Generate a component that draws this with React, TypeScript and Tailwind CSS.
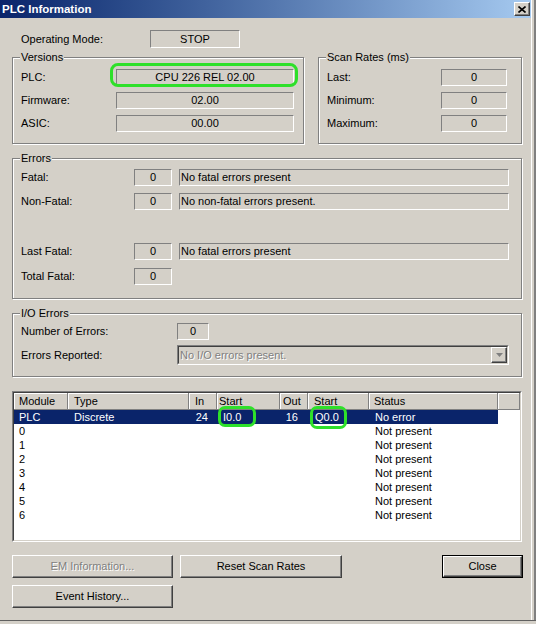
import React from "react";

const sunken =
  "border border-t-[#808080] border-l-[#808080] border-b-white border-r-white";
const raised =
  "border border-t-white border-l-white border-r-[#404040] border-b-[#404040] shadow-[inset_-1px_-1px_0_#808080]";

function Group({
  title,
  className,
  children,
}: {
  title: string;
  className: string;
  children?: React.ReactNode;
}) {
  return (
    <div
      className={
        "border border-[#808080] shadow-[inset_1px_1px_0_#fff,1px_1px_0_#fff] flex flex-col " +
        className
      }
    >
      <div className="-mt-[7px] ml-[7px] px-[1px] bg-[#d4d0c8] self-start leading-[13px]">
        {title}
      </div>
      {children}
    </div>
  );
}

function Btn({
  label,
  className,
  disabled,
}: {
  label: string;
  className: string;
  disabled?: boolean;
}) {
  return (
    <div
      className={
        raised +
        " h-[23px] flex items-center justify-center bg-[#d4d0c8] " +
        className +
        (disabled ? " text-[#808080] [text-shadow:1px_1px_0_#fff]" : "")
      }
    >
      {label}
    </div>
  );
}

type Row = {
  m: string;
  t?: string;
  i?: string;
  s?: string;
  o?: string;
  s2?: string;
  st: string;
  sel?: boolean;
};

const rows: Row[] = [
  { m: "PLC", t: "Discrete", i: "24", s: "I0.0", o: "16", s2: "Q0.0", st: "No error", sel: true },
  { m: "0", st: "Not present" },
  { m: "1", st: "Not present" },
  { m: "2", st: "Not present" },
  { m: "3", st: "Not present" },
  { m: "4", st: "Not present" },
  { m: "5", st: "Not present" },
  { m: "6", st: "Not present" },
];

const hdr =
  "h-[17px] flex items-center border-r border-b border-r-[#808080] border-b-[#808080] shadow-[inset_1px_1px_0_#fff] bg-[#d4d0c8]";

export default function App() {
  return (
    <div className="w-[536px] h-[624px] bg-[#d4d0c8] flex flex-col overflow-hidden text-[11px] leading-[13px] text-black font-['Liberation_Sans',Arial,sans-serif]">
      <div className="flex h-[620px]">
        <div className="w-[531px] flex flex-col">
          {/* Title bar */}
          <div className="h-[18px] flex items-center justify-between bg-linear-to-r from-[#0a246a] to-[#a6caf0] pl-[2px] pr-[1px]">
            <span className="text-white font-bold text-[11.5px]">PLC Information</span>
            <div
              className={
                raised + " w-[16px] h-[14px] bg-[#d4d0c8] flex items-center justify-center"
              }
            >
              <svg width="8" height="7" viewBox="0 0 8 7">
                <path d="M0.5 0.5 L7.5 6.5 M7.5 0.5 L0.5 6.5" stroke="black" strokeWidth="1.6" />
              </svg>
            </div>
          </div>

          {/* Operating mode */}
          <div className="mt-[12px] h-[18px] flex items-center">
            <div className="pl-[21px] w-[150px]">Operating Mode:</div>
            <div className={sunken + " w-[90px] h-[18px] flex items-center justify-center"}>
              STOP
            </div>
          </div>

          {/* Versions + Scan rates */}
          <div className="mt-[9px] flex">
            <Group title="Versions" className="ml-[12px] w-[292px] h-[87px]">
              <div className="mt-[5px] flex flex-col gap-[6px]">
                {[
                  ["PLC:", "CPU 226 REL 02.00"],
                  ["Firmware:", "02.00"],
                  ["ASIC:", "00.00"],
                ].map(([l, v], idx) => (
                  <div key={l} className="flex items-center pl-[8px] h-[17px]">
                    <div className="w-[95px]">{l}</div>
                    <div className="relative">
                      <div
                        className={sunken + " w-[178px] h-[17px] flex items-center justify-center"}
                      >
                        {v}
                      </div>
                      {idx === 0 && (
                        <div className="absolute left-[-6px] top-[-6px] w-[188px] h-[24px] border-[3px] border-[#2ee02a] rounded-[8px]" />
                      )}
                    </div>
                  </div>
                ))}
              </div>
            </Group>
            <Group title="Scan Rates (ms)" className="ml-[14px] w-[204px] h-[87px]">
              <div className="mt-[5px] flex flex-col gap-[6px]">
                {["Last:", "Minimum:", "Maximum:"].map((l) => (
                  <div key={l} className="flex items-center pl-[8px] h-[17px]">
                    <div className="w-[114px]">{l}</div>
                    <div className={sunken + " w-[66px] h-[17px] flex items-center justify-center"}>
                      0
                    </div>
                  </div>
                ))}
              </div>
            </Group>
          </div>

          {/* Errors */}
          <Group title="Errors" className="mt-[14px] ml-[12px] w-[510px] h-[141px]">
            {[
              ["Fatal:", "No fatal errors present", "mt-[4px]"],
              ["Non-Fatal:", "No non-fatal errors present.", "mt-[7px]"],
              ["Last Fatal:", "No fatal errors present", "mt-[33px]"],
              ["Total Fatal:", "", "mt-[8px]"],
            ].map(([l, msg, mt]) => (
              <div key={l} className={"flex items-center pl-[8px] h-[17px] " + mt}>
                <div className="w-[113px]">{l}</div>
                <div className={sunken + " w-[38px] h-[17px] flex items-center justify-center"}>
                  0
                </div>
                {msg && (
                  <div className={sunken + " ml-[7px] w-[330px] h-[17px] flex items-center pl-[1px]"}>
                    {msg}
                  </div>
                )}
              </div>
            ))}
          </Group>

          {/* I/O Errors */}
          <Group title="I/O Errors" className="mt-[14px] ml-[12px] w-[510px] h-[64px]">
            <div className="mt-[3px] flex items-center pl-[8px] h-[17px]">
              <div className="w-[156px]">Number of Errors:</div>
              <div className={sunken + " w-[32px] h-[17px] flex items-center justify-center"}>0</div>
            </div>
            <div className="mt-[5px] flex items-center pl-[8px] h-[20px]">
              <div className="w-[156px]">Errors Reported:</div>
              <div className={sunken + " w-[332px] h-[20px]"}>
                <div className="h-full border border-t-[#404040] border-l-[#404040] border-r-[#d4d0c8] border-b-[#d4d0c8] flex items-center justify-between bg-[#d4d0c8]">
                  <span className="pl-[1px] text-[#808080] [text-shadow:1px_1px_0_#fff]">
                    No I/O errors present.
                  </span>
                  <div className={raised + " w-[16px] h-[16px] flex items-center justify-center"}>
                    <svg width="7" height="4" viewBox="0 0 7 4">
                      <path d="M0 0 H7 L3.5 4 Z" fill="#808080" />
                    </svg>
                  </div>
                </div>
              </div>
            </div>
          </Group>

          {/* List view */}
          <div className="mt-[14px] ml-[12px] w-[510px] h-[151px] border border-t-[#808080] border-l-[#808080] border-r-white border-b-white">
            <div className="h-full border border-t-[#404040] border-l-[#404040] border-r-[#d4d0c8] border-b-[#d4d0c8] bg-white flex flex-col">
              <div className="flex">
                <div className={hdr + " w-[54px] pl-[5px]"}>Module</div>
                <div className={hdr + " w-[121px] pl-[6px]"}>Type</div>
                <div className={hdr + " w-[28px] pl-[6px]"}>In</div>
                <div className={hdr + " w-[63px] pl-[2px]"}>Start</div>
                <div className={hdr + " w-[28px] pl-[3px]"}>Out</div>
                <div className={hdr + " w-[61px] pl-[6px]"}>Start</div>
                <div className={hdr + " w-[129px] pl-[5px]"}>Status</div>
                <div className={hdr + " flex-1"} />
              </div>
              {rows.map((r) => {
                const c = r.sel ? "bg-[#0a246a] text-white" : "";
                return (
                  <div key={r.m} className="flex h-[14px] items-center">
                    <div className={"w-[54px] h-full flex items-center pl-[5px] " + c}>{r.m}</div>
                    <div className={"w-[121px] h-full flex items-center pl-[6px] " + c}>{r.t}</div>
                    <div className={"w-[28px] h-full flex items-center justify-end pr-[9px] " + c}>{r.i}</div>
                    <div className={"relative w-[63px] h-full flex items-center pl-[6px] " + c}>
                      {r.s}
                      {r.sel && (
                        <div className="absolute left-[1px] top-[-4px] w-[38px] h-[21px] border-[3px] border-[#2ee02a] rounded-[7px]" />
                      )}
                    </div>
                    <div className={"w-[28px] h-full flex items-center justify-end pr-[10px] " + c}>{r.o}</div>
                    <div className={"relative w-[61px] h-full flex items-center pl-[7px] " + c}>
                      {r.s2}
                      {r.sel && (
                        <div className="absolute left-[2px] top-[-4px] w-[37px] h-[23px] border-[3px] border-[#2ee02a] rounded-[7px]" />
                      )}
                    </div>
                    <div className={"w-[129px] h-full flex items-center pl-[6px] " + c}>{r.st}</div>
                  </div>
                );
              })}
            </div>
          </div>

          {/* Buttons */}
          <div className="mt-[13px] ml-[12px] flex">
            <Btn label="EM Information..." className="w-[161px]" disabled />
            <Btn label="Reset Scan Rates" className="ml-[7px] w-[162px]" />
            <div className="ml-[100px] w-[81px] h-[23px] border border-black">
              <Btn label="Close" className="w-full h-full" />
            </div>
          </div>
          <div className="mt-[7px] ml-[12px] flex">
            <Btn label="Event History..." className="w-[161px]" />
          </div>
        </div>
        <div className="w-[5px] border-l border-l-white border-r-2 border-r-[#808080]" />
      </div>
      <div className="h-[4px] border-t border-t-[#606060]" />
    </div>
  );
}
